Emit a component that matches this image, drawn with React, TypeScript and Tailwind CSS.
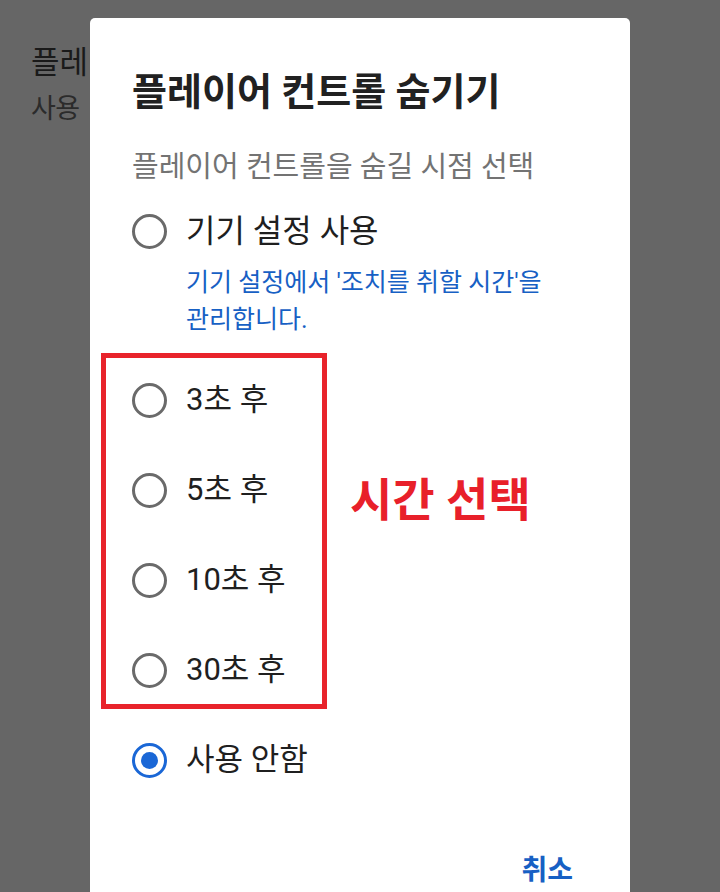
type Option = {
  label: string;
  checked?: boolean;
};

const timeOptions: Option[] = [
  { label: "3초 후" },
  { label: "5초 후" },
  { label: "10초 후" },
  { label: "30초 후" },
];

function Radio({ checked }: { checked?: boolean }) {
  return (
    <span
      className={`flex h-[35px] w-[35px] shrink-0 items-center justify-center rounded-full border-[3px] ${
        checked ? "border-[#1a67d6]" : "border-[#6a6a6a]"
      }`}
    >
      {checked && <span className="h-[17px] w-[17px] rounded-full bg-[#1a67d6]" />}
    </span>
  );
}

function Row({ label, checked }: Option) {
  return (
    <div className="flex h-[90px] items-center gap-[19px]">
      <Radio checked={checked} />
      <span className="text-[31px] leading-[36px] text-[#1f1f1f]">{label}</span>
    </div>
  );
}

export default function App() {
  return (
    <div className="relative h-[892px] w-[720px] overflow-hidden bg-[#666666] font-[Roboto,'Noto_Sans_CJK_KR',sans-serif]">
      {/* settings screen behind the scrim */}
      <div className="flex flex-col whitespace-nowrap pl-[31px] pt-[42px]">
        <span className="text-[31px] leading-[42px] text-[#1a1a1a]">플레이어 컨트롤 숨기기</span>
        <span className="mt-[8px] text-[27px] leading-[34px] tracking-[-0.5px] text-[#2b2b2b]">사용&nbsp;&nbsp;안함</span>
      </div>

      {/* dialog */}
      <div className="absolute left-[90px] top-[18px] h-[900px] w-[540px] rounded-[5px] bg-white pl-[42px] pr-[57px] pt-[52px]">
        <h2 className="whitespace-nowrap text-[38px] font-bold leading-[44px] text-[#212121]">플레이어 컨트롤 숨기기</h2>
        <p className="mt-[35px] whitespace-nowrap text-[29px] leading-[36px] text-[#737373]">플레이어 컨트롤을 숨길 시점 선택</p>

        <div className="mt-[18px] flex h-[56px] items-center gap-[19px]">
          <Radio />
          <span className="text-[32px] leading-[36px] text-[#1f1f1f]">기기 설정 사용</span>
        </div>
        <p className="mt-[5px] whitespace-nowrap pl-[54px] text-[25px] leading-[37px] text-[#1760c4]">
          기기 설정에서 '조치를 취할 시간'을
          <br />
          관리합니다.
        </p>

        <div className="relative mt-[17px]">
          {timeOptions.map((o) => (
            <Row key={o.label} {...o} />
          ))}
          {/* annotation */}
          <div className="absolute -left-[31px] -top-[2px] bottom-[6px] w-[226px] border-[5px] border-[#e8232b]" />
          <span className="absolute left-[218px] top-[118px] whitespace-nowrap text-[46px] font-bold leading-[54px] text-[#e8202a]">
            시간 선택
          </span>
        </div>

        <Row label="사용 안함" checked />

        <div className="mt-[50px] flex justify-end">
          <span className="text-[28px] font-bold leading-[32px] text-[#1760c4]">취소</span>
        </div>
      </div>
    </div>
  );
}
